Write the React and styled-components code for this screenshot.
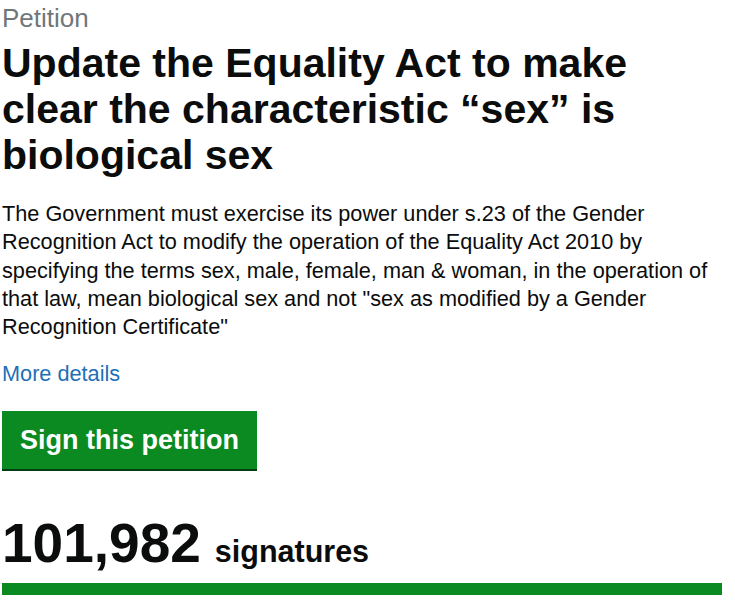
import styled, { createGlobalStyle } from "styled-components";

const GlobalStyle = createGlobalStyle`
  body {
    margin: 0;
    background: #ffffff;
    font-family: "Liberation Sans", Arial, sans-serif;
    color: #0b0c0c;
  }
`;

const Page = styled.main`
  width: 720px;
  padding: 3px 0 0 2px;
`;

const Caption = styled.span`
  display: block;
  font-size: 26px;
  line-height: 30px;
  color: #6f777b;
`;

const Title = styled.h1`
  margin: 7px 0 0;
  font-size: 41px;
  line-height: 46px;
  font-weight: 700;
`;

const Action = styled.p`
  margin: 22px 0 0;
  font-size: 21.7px;
  line-height: 28.3px;
`;

const DetailsLink = styled.a`
  display: block;
  width: fit-content;
  margin-top: 19px;
  font-size: 21.7px;
  line-height: 28px;
  color: #1d70b8;
  text-decoration: none;
`;

const SignButton = styled.a`
  display: block;
  width: fit-content;
  margin-top: 23px;
  padding: 13px 18px 13px 18px;
  background: #0a8a20;
  color: #ffffff;
  font-size: 27px;
  line-height: 32px;
  font-weight: 700;
  text-decoration: none;
  box-shadow: 0 2px 0 #053d12;
`;

const Count = styled.p`
  margin: 47px 0 0;
  font-size: 55px;
  line-height: 55px;
  font-weight: 700;
`;

const CountLabel = styled.span`
  font-size: 30.5px;
  line-height: 1;
  margin-left: 14px;
`;

const Progress = styled.div`
  margin-top: 12px;
  height: 12px;
  background: #dee0e2;
`;

const ProgressFill = styled.div`
  height: 100%;
  background: #0a8a20;
`;

export default function App() {
  const signatures = 101982;
  const target = 100000;
  const pct = Math.min(100, (signatures / target) * 100);

  return (
    <>
      <GlobalStyle />
      <Page>
        <Caption>Petition</Caption>
        <Title>
          Update the Equality Act to make clear the characteristic “sex” is
          biological sex
        </Title>
        <Action>
          The Government must exercise its power under s.23 of the Gender
          Recognition Act to modify the operation of the Equality Act 2010 by
          specifying the terms sex, male, female, man &amp; woman, in the
          operation of that law, mean biological sex and not "sex as modified
          by a Gender Recognition Certificate"
        </Action>
        <DetailsLink href="#">More details</DetailsLink>
        <SignButton href="#">Sign this petition</SignButton>
        <Count>
          {signatures.toLocaleString("en-GB")}
          <CountLabel>signatures</CountLabel>
        </Count>
        <Progress>
          <ProgressFill style={{ width: `${pct}%` }} />
        </Progress>
      </Page>
    </>
  );
}
